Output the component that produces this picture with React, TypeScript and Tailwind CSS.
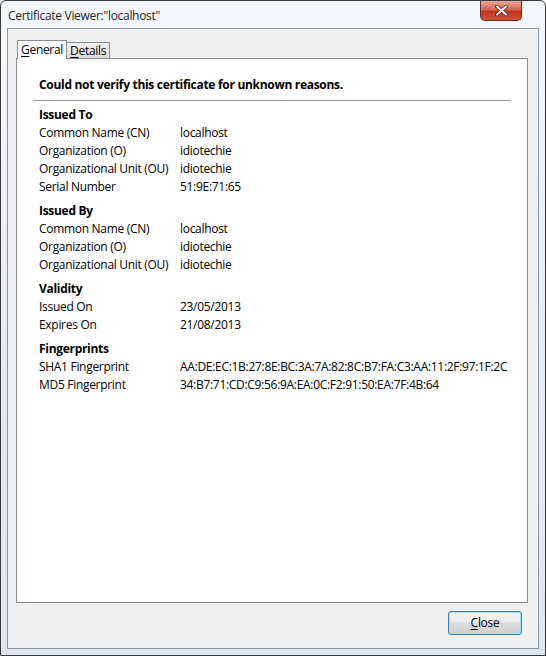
const sections: { title: string; rows: [string, string][] }[] = [
  {
    title: "Issued To",
    rows: [
      ["Common Name (CN)", "localhost"],
      ["Organization (O)", "idiotechie"],
      ["Organizational Unit (OU)", "idiotechie"],
      ["Serial Number", "51:9E:71:65"],
    ],
  },
  {
    title: "Issued By",
    rows: [
      ["Common Name (CN)", "localhost"],
      ["Organization (O)", "idiotechie"],
      ["Organizational Unit (OU)", "idiotechie"],
    ],
  },
  {
    title: "Validity",
    rows: [
      ["Issued On", "23/05/2013"],
      ["Expires On", "21/08/2013"],
    ],
  },
  {
    title: "Fingerprints",
    rows: [
      ["SHA1 Fingerprint", "AA:DE:EC:1B:27:8E:BC:3A:7A:82:8C:B7:FA:C3:AA:11:2F:97:1F:2C"],
      ["MD5 Fingerprint", "34:B7:71:CD:C9:56:9A:EA:0C:F2:91:50:EA:7F:4B:64"],
    ],
  },
];

export default function App() {
  return (
    <div
      className="relative flex h-[656px] w-[546px] flex-col overflow-hidden rounded-t-[6px] border border-[#3a3a3a] bg-[linear-gradient(180deg,#f4f7fa_0%,#e6ebf1_60%,#dfe5ec_100%)] text-[12px] tracking-[-0.3px] text-black"
      style={{ fontFamily: '"Open Sans", "Noto Sans", sans-serif' }}
    >
      {/* title bar */}
      <div className="flex h-[27px] items-center justify-between pl-[7px] pr-[23px]">
        <span className="pt-[2px] text-[12px] text-[#1e1e1e]">Certificate Viewer:"localhost"</span>
        <button
          type="button"
          aria-label="Close window"
          className="-mt-[7px] flex h-[20px] w-[42px] items-center justify-center rounded-b-[5px] border border-t-0 border-[#6b2a22] bg-[linear-gradient(180deg,#e9a99c_0%,#d9644f_45%,#c2341e_55%,#d0513a_100%)]"
        >
          <svg width="13" height="11" viewBox="0 0 13 11">
            <path d="M2 1.5 L11 9.5 M11 1.5 L2 9.5" stroke="#5a1d14" strokeWidth="3.6" strokeLinecap="round" />
            <path d="M2 1.5 L11 9.5 M11 1.5 L2 9.5" stroke="#ffffff" strokeWidth="2" strokeLinecap="round" />
          </svg>
        </button>
      </div>

      {/* client area */}
      <div className="mx-[6px] mb-[6px] flex flex-1 flex-col border border-[#8f959c] bg-[#f0f0f0] pl-[8px] pr-[10px]">
        {/* tabs */}
        <div className="mt-[10px] flex h-[19px] items-end pl-[1px]">
          <div className="relative z-10 -mb-px flex h-[19px] items-center border border-b-0 border-[#898c95] bg-white px-[3px]">
            <span>
              <span className="underline underline-offset-2">G</span>eneral
            </span>
          </div>
          <div className="flex h-[16px] items-center border border-b-0 border-l-0 border-[#898c95] bg-[linear-gradient(180deg,#f2f2f2,#dcdcdc)] px-[3px]">
            <span>
              <span className="underline underline-offset-2">D</span>etails
            </span>
          </div>
        </div>

        {/* tab panel */}
        <div className="flex h-[545px] flex-col border border-[#898c95] bg-white px-[16px] pt-[18px]">
          <p className="px-[6px] text-[12px] font-bold leading-[16px]">
            Could not verify this certificate for unknown reasons.
          </p>
          <div className="mt-[7px] h-px bg-[#a0a0a0]" />

          <div className="mt-[5px] flex flex-col gap-[6px] px-[6px]">
            {sections.map((s) => (
              <div key={s.title}>
                <div className="text-[12px] font-bold leading-[18px]">{s.title}</div>
                {s.rows.map(([k, v]) => (
                  <div key={k} className="flex leading-[18px]">
                    <span className="w-[141px] shrink-0">{k}</span>
                    <span className="whitespace-nowrap">{v}</span>
                  </div>
                ))}
              </div>
            ))}
          </div>
        </div>

        {/* footer */}
        <div className="flex flex-1 items-start justify-end pr-[6px] pt-[8px]">
          <button
            type="button"
            className="flex h-[24px] w-[74px] items-center justify-center rounded-[3px] border border-[#3c7fb1] bg-[linear-gradient(180deg,#f2f2f2_0%,#ebebeb_45%,#dddddd_50%,#cfcfcf_100%)] shadow-[inset_0_0_0_1px_#a8e0f8]"
          >
            <span>
              <span className="underline underline-offset-2">C</span>lose
            </span>
          </button>
        </div>
      </div>
    </div>
  );
}
